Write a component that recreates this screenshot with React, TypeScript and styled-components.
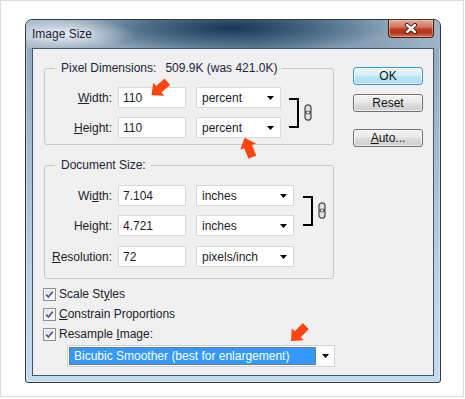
import * as React from 'react';
import styled, { createGlobalStyle } from 'styled-components';

const GlobalStyle = createGlobalStyle`
  html, body {
    margin: 0;
    padding: 0;
    background: #fff;
  }
  body {
    font-family: "Liberation Sans", Arial, sans-serif;
    font-size: 12px;
    color: #1c1c2c;
  }
  * {
    box-sizing: border-box;
  }
`;

const Page = styled.div`
  position: relative;
  width: 464px;
  height: 397px;
  border: 1px solid #dcdcdc;
  padding: 18px 0 0 24px;
`;

const Window = styled.div`
  width: 416px;
  height: 364px;
  display: flex;
  flex-direction: column;
  border: 1px solid #2e3944;
  border-radius: 7px 7px 3px 3px;
  overflow: hidden;
  background: linear-gradient(180deg, #8ea6bb 0%, #a3bbd0 35%, #bcd4ea 75%, #c3daef 100%);
  box-shadow: inset 0 0 0 1px rgba(255, 255, 255, 0.35);
`;

const TitleBar = styled.div`
  height: 28px;
  display: flex;
  align-items: flex-start;
  padding-left: 6px;
  background:
    radial-gradient(ellipse 70px 16px at 40px 14px, rgba(240, 244, 248, 0.85), rgba(240, 244, 248, 0) 100%),
    radial-gradient(ellipse 160px 26px at 205px 8px, rgba(20, 52, 82, 0.97), rgba(42, 78, 108, 0.6) 55%, rgba(60, 95, 125, 0) 100%),
    linear-gradient(90deg, #a7b9c8 0%, #86a0b5 30%, #6f8ba3 55%, #8aa3b8 85%, #9fb4c6 100%);
`;

const Title = styled.div`
  padding-top: 7px;
  font-size: 12px;
  line-height: 15px;
  color: #1b1b38;
  text-shadow: 0 0 6px rgba(255, 255, 255, 0.9);
`;

const CloseButton = styled.div`
  margin-left: auto;
  margin-right: 6px;
  width: 46px;
  height: 18px;
  display: flex;
  align-items: center;
  justify-content: center;
  border: 1px solid #4a1a10;
  border-top: none;
  border-radius: 0 0 4px 4px;
  background: linear-gradient(180deg, #e6a797 0%, #d37a66 40%, #c0391f 55%, #b8351c 75%, #d0705a 100%);
  box-shadow: inset 0 0 0 1px rgba(255, 210, 190, 0.45);
`;

const Client = styled.div`
  flex: 1;
  display: flex;
  margin: 0 6px 6px;
  padding: 12px 0 0 10px;
  border: 1px solid #44566a;
  background: #f0f0f0;
`;

const LeftColumn = styled.div`
  display: flex;
  flex-direction: column;
`;

const Group = styled.fieldset<{ $top: number; $bottom: number; $gap?: number }>`
  margin: ${p => p.$gap ?? 0}px 0 0 1px;
  width: 290px;
  min-width: 0;
  padding: ${p => p.$top}px 0 ${p => p.$bottom}px 0;
  border: 1px solid #c3c6ca;
  border-radius: 3px;
`;

const Legend = styled.legend`
  margin-left: 10px;
  padding: 0 5px 0 6px;
  line-height: 14px;
  font-size: 12px;
  color: #1c1f3c;
`;

const Gap = styled.span`
  margin-left: 9px;
`;

const Linked = styled.div`
  display: flex;
  align-items: center;
`;

const Stack = styled.div`
  display: flex;
  flex-direction: column;
  gap: 9px;
`;

const Row = styled.div<{ $gap?: number }>`
  display: flex;
  align-items: center;
  height: 21px;
  margin-top: ${p => p.$gap ?? 0}px;
`;

const Label = styled.div`
  width: 67px;
  text-align: right;
  white-space: nowrap;
`;

const U = styled.span`
  text-decoration: underline;
  text-underline-offset: 1px;
`;

const Field = styled.div`
  margin-left: 6px;
  width: 68px;
  height: 21px;
  display: flex;
  align-items: center;
  padding-left: 4px;
  background: #fff;
  border: 1px solid #d7d9dc;
`;

const Select = styled.div<{ $width: number }>`
  margin-left: 10px;
  width: ${p => p.$width}px;
  height: 21px;
  display: flex;
  align-items: center;
  justify-content: space-between;
  padding: 0 6px 0 5px;
  background: #fff;
  border: 1px solid #d7d9dc;
`;

const Bracket = styled.div<{ $gap: number }>`
  margin-left: ${p => p.$gap}px;
  width: 10px;
  height: 30px;
  border: 2px solid #000;
  border-left: none;
`;

const Chain = styled.svg`
  margin-left: 5px;
  width: 8px;
  height: 17px;
`;

const Checks = styled.div`
  margin-top: 5px;
  display: flex;
  flex-direction: column;
`;

const CheckRow = styled.div`
  height: 20px;
  display: flex;
  align-items: center;
  gap: 3px;
`;

const Box = styled.div`
  width: 13px;
  height: 13px;
  border: 1px solid #8e8f8f;
  background: linear-gradient(135deg, #dcdcdc 0%, #f6f6f6 60%, #ffffff 100%);
  box-shadow: inset 0 0 0 1px #f4f4f4;
  display: flex;
  align-items: center;
  justify-content: center;
`;

const Dropdown = styled.div`
  margin: 1px 0 0 24px;
  width: 268px;
  height: 22px;
  display: flex;
  align-items: center;
  padding: 1px 5px 1px 1px;
  background: #fff;
  border: 1px solid #d2d4d8;
`;

const Selected = styled.div`
  width: 247px;
  height: 18px;
  display: flex;
  align-items: center;
  padding-left: 5px;
  background: #3399ff;
  color: #fff;
  outline: 1px dotted #b0601a;
  outline-offset: -1px;
  white-space: nowrap;
`;

const DropArrow = styled.span`
  margin-left: auto;
  display: flex;
`;

const ButtonColumn = styled.div`
  margin: 6px 0 0 18px;
  display: flex;
  flex-direction: column;
`;

const Button = styled.div<{ $primary?: boolean; $gap?: number }>`
  margin-top: ${p => p.$gap ?? 0}px;
  width: 70px;
  height: 18px;
  display: flex;
  align-items: center;
  justify-content: center;
  border: 1px solid ${p => (p.$primary ? '#3c96cc' : '#707070')};
  border-radius: 3px;
  background: ${p =>
    p.$primary
      ? 'linear-gradient(180deg, #eaf6fd 0%, #d9f0fc 45%, #bee6fd 52%, #a7d9f5 100%)'
      : 'linear-gradient(180deg, #f2f2f2 0%, #ebebeb 45%, #dddddd 52%, #cfcfcf 100%)'};
  box-shadow: inset 0 0 0 1px rgba(255, 255, 255, 0.65);
  color: #111;
`;

const Pointer = styled.svg<{ $x: number; $y: number; $angle: number }>`
  position: absolute;
  left: ${p => p.$x - 11}px;
  top: ${p => p.$y - 9}px;
  width: 21px;
  height: 17px;
  transform: rotate(${p => p.$angle}deg);
`;

const Arrow = () => (
  <svg width="7" height="4" viewBox="0 0 7 4">
    <polygon points="0,0 7,0 3.5,4" fill="#000" />
  </svg>
);

const ChainIcon = () => (
  <Chain viewBox="0 0 8 17">
    <rect x="1" y="0.8" width="6" height="9" rx="3" fill="none" stroke="#4a4a4a" strokeWidth="1.3" />
    <rect x="1" y="7.2" width="6" height="9" rx="3" fill="none" stroke="#4a4a4a" strokeWidth="1.3" />
    <rect x="2.6" y="3" width="2.8" height="4.5" rx="1.4" fill="none" stroke="#c8c8c8" strokeWidth="0.8" />
    <rect x="2.6" y="9.5" width="2.8" height="4.5" rx="1.4" fill="none" stroke="#c8c8c8" strokeWidth="0.8" />
  </Chain>
);

const Check = ({ children }: { children: React.ReactNode }) => (
  <CheckRow>
    <Box>
      <svg width="9" height="9" viewBox="0 0 9 9">
        <path d="M1.2 4.6 L3.4 7 L7.8 1.6" fill="none" stroke="#4b5f96" strokeWidth="1.7" />
      </svg>
    </Box>
    <span>{children}</span>
  </CheckRow>
);

const OrangeArrow = ({ x, y, angle }: { x: number; y: number; angle: number }) => (
  <Pointer $x={x} $y={y} $angle={angle} viewBox="0 0 21 17">
    <polygon points="0,8.5 9.5,0 9.5,4.3 21,4.3 21,12.7 9.5,12.7 9.5,17" fill="#ff4410" />
  </Pointer>
);

const App = () => (
  <>
    <GlobalStyle />
    <Page>
      <Window>
        <TitleBar>
          <Title>Image Size</Title>
          <CloseButton>
            <svg width="14" height="11" viewBox="0 0 14 11">
              <path d="M3 2 L11 9 M11 2 L3 9" stroke="#3b1409" strokeWidth="4.2" strokeLinecap="round" />
              <path d="M3 2 L11 9 M11 2 L3 9" stroke="#fff" strokeWidth="2.4" strokeLinecap="round" />
            </svg>
          </CloseButton>
        </TitleBar>
        <Client>
          <LeftColumn>
            <Group $top={12} $bottom={6}>
              <Legend>
                Pixel Dimensions:<Gap>509.9K (was 421.0K)</Gap>
              </Legend>
              <Linked>
                <Stack>
                  <Row>
                    <Label>
                      <U>W</U>idth:
                    </Label>
                    <Field>110</Field>
                    <Select $width={85}>
                      percent
                      <Arrow />
                    </Select>
                  </Row>
                  <Row>
                    <Label>
                      <U>H</U>eight:
                    </Label>
                    <Field>110</Field>
                    <Select $width={85}>
                      percent
                      <Arrow />
                    </Select>
                  </Row>
                </Stack>
                <Bracket $gap={8} />
                <ChainIcon />
              </Linked>
            </Group>

            <Group $top={13} $bottom={11} $gap={13}>
              <Legend>Document Size:</Legend>
              <Linked>
                <Stack>
                  <Row>
                    <Label>
                      Wi<U>d</U>th:
                    </Label>
                    <Field>7.104</Field>
                    <Select $width={98}>
                      inches
                      <Arrow />
                    </Select>
                  </Row>
                  <Row>
                    <Label>
                      Hei<U>g</U>ht:
                    </Label>
                    <Field>4.721</Field>
                    <Select $width={98}>
                      inches
                      <Arrow />
                    </Select>
                  </Row>
                </Stack>
                <Bracket $gap={9} />
                <ChainIcon />
              </Linked>
              <Row $gap={10}>
                <Label>
                  <U>R</U>esolution:
                </Label>
                <Field>72</Field>
                <Select $width={98}>
                  pixels/inch
                  <Arrow />
                </Select>
              </Row>
            </Group>

            <Checks>
              <Check>
                Scale St<U>y</U>les
              </Check>
              <Check>
                <U>C</U>onstrain Proportions
              </Check>
              <Check>
                Resample <U>I</U>mage:
              </Check>
            </Checks>

            <Dropdown>
              <Selected>Bicubic Smoother (best for enlargement)</Selected>
              <DropArrow>
                <Arrow />
              </DropArrow>
            </Dropdown>
          </LeftColumn>

          <ButtonColumn>
            <Button $primary>OK</Button>
            <Button $gap={9}>Reset</Button>
            <Button $gap={17}>
              <U>A</U>uto...
            </Button>
          </ButtonColumn>
        </Client>
      </Window>

      <OrangeArrow x={159} y={88} angle={-40} />
      <OrangeArrow x={248} y={147} angle={68} />
      <OrangeArrow x={298} y={333} angle={-45} />
    </Page>
  </>
);

export default App;
